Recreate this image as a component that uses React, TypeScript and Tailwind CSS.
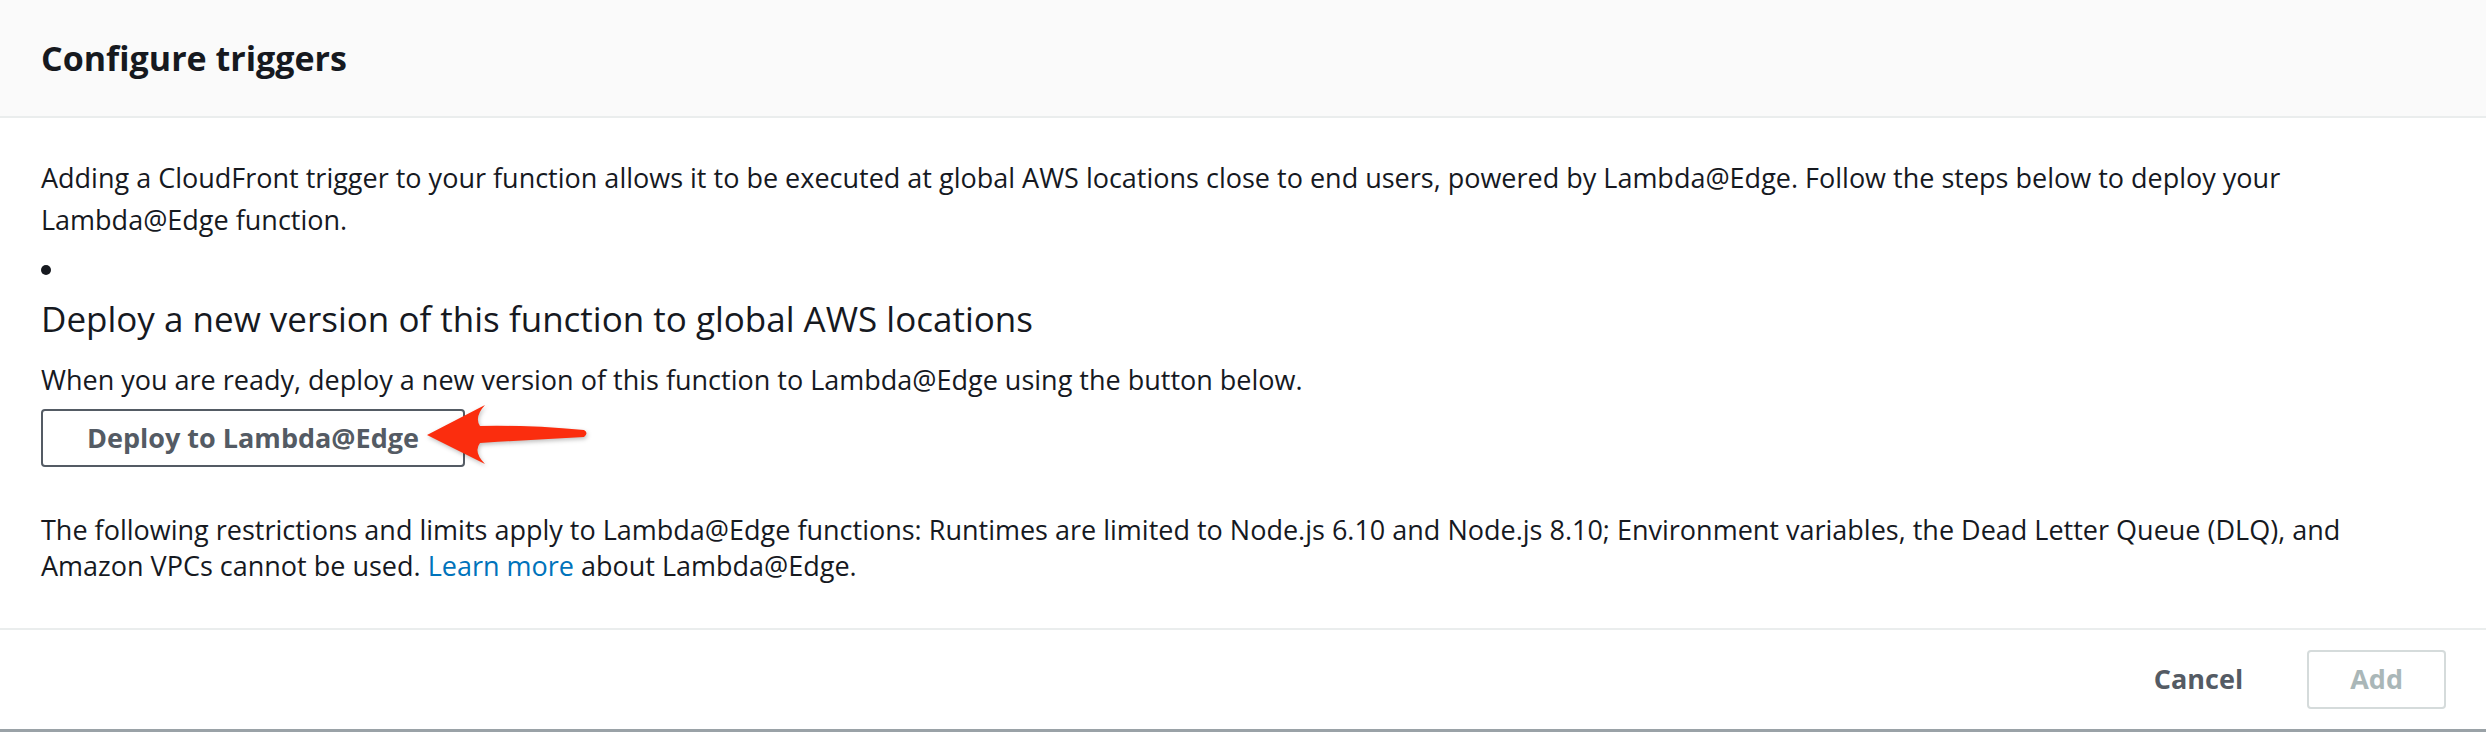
import React from "react";

const RedArrow: React.FC = () => (
  <svg
    className="absolute left-[339px] top-[-14px] drop-shadow-[1px_2px_2px_rgba(0,0,0,0.25)]"
    width="220"
    height="85"
    viewBox="0 0 220 85"
  >
    <path
      d="M47,40 L105,10 Q94,22 100,31 Q150,30 204,35 Q209,38 204,42 Q150,45 100,48 Q93,57 105,69 Z"
      fill="#fb2d0e"
    />
  </svg>
);

export default function App() {
  return (
    <div className="w-[2486px] h-[732px] bg-white text-[#16191f] font-['Open_Sans',sans-serif] flex flex-col border-b-[3px] border-[#9aa2a7]">
      <div className="h-[118px] bg-[#fafafa] border-b-2 border-[#eaeded] px-[41px] flex items-center">
        <h2 className="text-[34px] font-bold leading-none">Configure triggers</h2>
      </div>

      <div className="flex-1 px-[41px] pt-[39px]">
        <p className="text-[27px] leading-[42px]">
          Adding a CloudFront trigger to your function allows it to be executed at global AWS locations close to end
          users, powered by Lambda@Edge. Follow the steps below to deploy your Lambda@Edge function.
        </p>

        <div className="h-[42px] mt-[8px] flex items-center">
          <span className="w-[10px] h-[10px] rounded-full bg-[#16191f]" />
        </div>

        <h3 className="text-[35px] leading-[42px] mt-[7px]">
          Deploy a new version of this function to global AWS locations
        </h3>
        <p className="text-[27px] leading-[38px] mt-[21px]">
          When you are ready, deploy a new version of this function to Lambda@Edge using the button below.
        </p>

        <div className="relative mt-[10px] w-fit">
          <button className="h-[58px] px-[44px] border-2 border-[#545b64] rounded-[4px] text-[27px] font-bold text-[#545b64] bg-white">
            Deploy to Lambda@Edge
          </button>
          <RedArrow />
        </div>

        <p className="text-[27px] leading-[36px] mt-[45px]">
          The following restrictions and limits apply to Lambda@Edge functions: Runtimes are limited to Node.js 6.10 and
          Node.js 8.10; Environment variables, the Dead Letter Queue (DLQ), and Amazon VPCs cannot be used.{" "}
          <a className="text-[#0073bb]">Learn more</a> about Lambda@Edge.
        </p>
      </div>

      <div className="h-[101px] border-t-2 border-[#eaeded] px-[40px] flex items-center justify-end gap-[20px]">
        <button className="h-[59px] px-[42px] border-2 border-transparent text-[27px] font-bold text-[#545b64]">
          Cancel
        </button>
        <button className="h-[59px] px-[41px] border-2 border-[#d5dbdb] rounded-[4px] text-[27px] font-bold text-[#aab7b8] bg-white">
          Add
        </button>
      </div>
    </div>
  );
}
